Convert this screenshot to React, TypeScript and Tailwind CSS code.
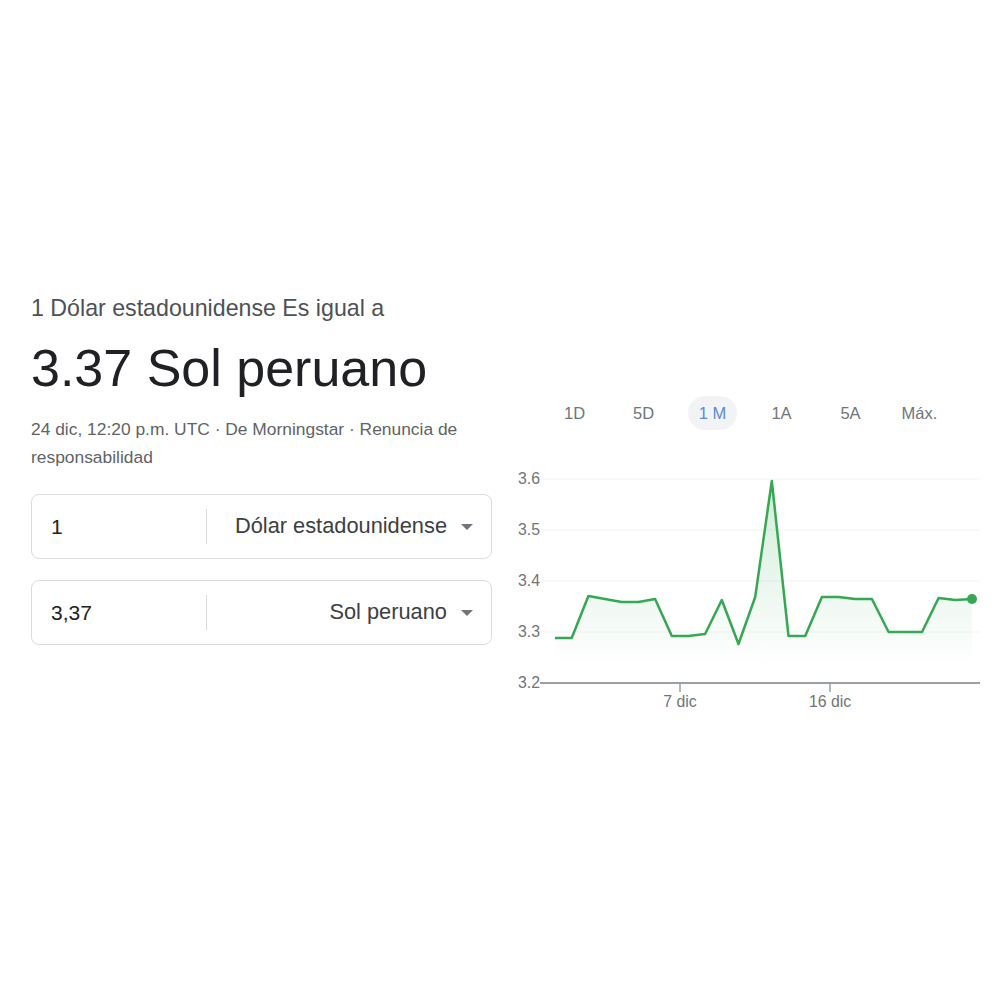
import React from "react";

const ys = [638, 638, 596, 599, 602, 602, 599, 636, 636, 634, 600, 644, 597, 481, 636, 636, 597, 597, 599, 599, 632, 632, 632, 598, 600, 599];
const pts = ys.map((y, i) => [555 + i * 16.68, y] as const);
const line = pts.map(([x, y]) => `${x.toFixed(1)},${y}`).join(" ");
const area = `555,683 ${line} ${pts[pts.length - 1][0].toFixed(1)},683`;

const tabs = ["1D", "5D", "1 M", "1A", "5A", "Máx."];

function Caret() {
  return (
    <svg width="12" height="6" viewBox="0 0 12 6" className="shrink-0">
      <path d="M0 0h12L6 6z" fill="#70757a" />
    </svg>
  );
}

function CurrencyBox({ value, unit }: { value: string; unit: string }) {
  return (
    <div className="flex h-[65px] items-center rounded-lg border border-[#dadce0]">
      <div className="w-[174px] pl-[19px] text-[21px] text-[#202124]">{value}</div>
      <div className="h-[35px] w-px bg-[#dadce0]" />
      <div className="flex flex-1 items-center justify-end gap-[14px] pr-[18px] text-[21.8px] text-[#3c4043]">
        <span>{unit}</span>
        <Caret />
      </div>
    </div>
  );
}

function Chart() {
  const grid = [479, 530, 581, 632];
  const labels = ["3.6", "3.5", "3.4", "3.3", "3.2"];
  return (
    <svg width="480" height="260" viewBox="505 460 480 260" className="block">
      <defs>
        <linearGradient id="fill" x1="0" y1="481" x2="0" y2="665" gradientUnits="userSpaceOnUse">
          <stop offset="0" stopColor="#34a853" stopOpacity="0.22" />
          <stop offset="1" stopColor="#34a853" stopOpacity="0" />
        </linearGradient>
      </defs>
      {grid.map((y) => (
        <line key={y} x1="540" x2="980" y1={y} y2={y} stroke="#f1f3f4" strokeWidth="1" />
      ))}
      {labels.map((l, i) => (
        <text key={l} x="540" y={479 + i * 51 + 5} textAnchor="end" fontSize="15.8" fill="#70757a" fontFamily="'Liberation Sans', Arial, sans-serif">
          {l}
        </text>
      ))}
      <polygon points={area} fill="url(#fill)" />
      <polyline points={line} fill="none" stroke="#34a853" strokeWidth="2.5" strokeLinejoin="round" />
      <circle cx={pts[pts.length - 1][0]} cy={599} r="5" fill="#34a853" />
      <line x1="540" x2="980" y1="683" y2="683" stroke="#9aa0a6" strokeWidth="2" />
      <line x1="680" x2="680" y1="683" y2="692" stroke="#9aa0a6" strokeWidth="1.5" />
      <line x1="830" x2="830" y1="683" y2="692" stroke="#9aa0a6" strokeWidth="1.5" />
      <text x="680" y="707" textAnchor="middle" fontSize="15.8" fill="#70757a" fontFamily="'Liberation Sans', Arial, sans-serif">7 dic</text>
      <text x="830" y="707" textAnchor="middle" fontSize="15.8" fill="#70757a" fontFamily="'Liberation Sans', Arial, sans-serif">16 dic</text>
    </svg>
  );
}

export default function App() {
  return (
    <div className="h-[1000px] w-[1000px] bg-white pt-[294px] pl-[31px] font-['Liberation_Sans',Arial,sans-serif]">
      <div className="flex items-start">
        <div className="w-[461px]">
          <div className="text-[23.2px] leading-[28px] text-[#4d5156]">1 Dólar estadounidense Es igual a</div>
          <div className="mt-[16px] text-[52px] leading-[60px] text-[#202124]">3.37 Sol peruano</div>
          <div className="mt-[17px] text-[17.4px] leading-[28px] text-[#5f6368]">
            24 dic, 12:20 p.m. UTC · De Morningstar · Renuncia de responsabilidad
          </div>
          <div className="mt-[23px] flex flex-col gap-[21px]">
            <CurrencyBox value="1" unit="Dólar estadounidense" />
            <CurrencyBox value="3,37" unit="Sol peruano" />
          </div>
        </div>
        <div className="ml-[13px] mt-[102px] flex flex-col">
          <div className="flex pl-[35px]">
            {tabs.map((t) => (
              <div key={t} className="flex h-[34px] w-[69px] items-center justify-center">
                {t === "1 M" ? (
                  <span className="flex h-[34px] w-[49px] items-center justify-center rounded-full bg-[#f1f3f4] text-[16.5px] text-[#5a8ad6]">
                    {t}
                  </span>
                ) : (
                  <span className="text-[16.5px] text-[#70757a]">{t}</span>
                )}
              </div>
            ))}
          </div>
          <div className="mt-[30px]">
            <Chart />
          </div>
        </div>
      </div>
    </div>
  );
}
